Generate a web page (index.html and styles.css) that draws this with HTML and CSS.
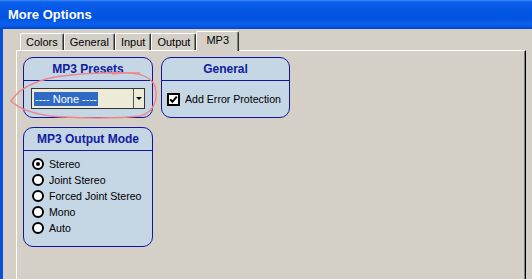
FILE: index.html
```html
<!DOCTYPE html>
<html lang="en">
<head>
  <meta charset="UTF-8" />
  <title>More Options</title>
  <link rel="stylesheet" href="styles.css">
</head>
<body>
  <div class="window">
    <div class="titlebar">More Options</div>

    <div class="main">
      <div class="tabs">
        <div class="tab">Colors</div>
        <div class="tab">General</div>
        <div class="tab">Input</div>
        <div class="tab">Output</div>
        <div class="tab active">MP3</div>
      </div>

      <div class="panel">
        <div class="groups">
          <div class="group presets">
            <div class="group-title">MP3 Presets</div>
            <div class="group-body">
              <div class="combo">
                <span class="combo-value">---- None ----</span>
                <span class="combo-btn"></span>
              </div>
            </div>
          </div>

          <div class="group general">
            <div class="group-title">General</div>
            <div class="group-body">
              <label class="check">
                <svg width="13" height="13" viewBox="0 0 13 13">
                  <rect x="1" y="1" width="11" height="11" fill="#fff" stroke="#000" stroke-width="2"/>
                  <path d="M3.2 6.4 L5.4 8.8 L9.8 3.6" fill="none" stroke="#000" stroke-width="2"/>
                </svg>
                Add Error Protection
              </label>
            </div>
          </div>

          <div class="group mode">
            <div class="group-title">MP3 Output Mode</div>
            <div class="group-body">
              <div class="radio checked"><span class="dot"></span>Stereo</div>
              <div class="radio"><span class="dot"></span>Joint Stereo</div>
              <div class="radio"><span class="dot"></span>Forced Joint Stereo</div>
              <div class="radio"><span class="dot"></span>Mono</div>
              <div class="radio"><span class="dot"></span>Auto</div>
            </div>
          </div>
        </div>
      </div>
    </div>

    <!-- hand drawn marker around the presets box -->
    <svg class="scribble" width="532" height="279" viewBox="0 0 532 279">
      <path d="M112 74 C132 71 150 74 155 86 C158 98 155 112 140 116 C115 119 70 118 50 116 C30 113 18 108 11 101 C18 90 30 82 55 77 C80 73 110 72 140 73"
            fill="none" stroke="#f0868c" stroke-width="1.5"/>
    </svg>
  </div>
</body>
</html>
```

FILE: styles.css
```css
* { box-sizing: border-box; }
body {
  margin: 0;
  font-family: "Liberation Sans", Arial, sans-serif;
  font-size: 11px;
  color: #000;
}
.window {
  position: relative;
  width: 532px;
  height: 279px;
  background: #d4d0c8;
  overflow: hidden;
  display: flex;
  flex-direction: column;
}
.titlebar {
  height: 29px;
  padding-left: 8px;
  line-height: 30px;
  color: #fff;
  font-weight: bold;
  font-size: 13px;
  background: linear-gradient(#3d8cf8 0, #0b5fea 2px, #0458e6 10px, #0252e0 18px, #0a60ee 24px, #0556e4 27px, #0040c0 29px);
}
.main {
  flex: 1;
  display: flex;
  flex-direction: column;
  border-left: 3px solid #0a4fd8;
  padding: 2px 6px 0 13px;
}
.tabs {
  display: flex;
  align-items: flex-end;
  height: 19px;
  padding-left: 4px;
}
.tab {
  height: 17px;
  padding: 0 5px;
  line-height: 16px;
  font-size: 11px;
  border-top: 1px solid #fff;
  border-left: 1px solid #fff;
  border-right: 1px solid #303030;
  border-radius: 2px 2px 0 0;
  box-shadow: inset -1px 0 #808080;
}
.tab.active {
  position: relative;
  z-index: 1;
  height: 20px;
  margin-bottom: -1px;
  padding: 0 9px;
  line-height: 17px;
  background: #d4d0c8;
}
.panel {
  flex: 1;
  border-top: 1px solid #fff;
  border-left: 1px solid #fff;
  border-right: 1px solid #000;
  box-shadow: inset -1px 0 #808080;
  padding: 6px 0 0 6px;
}
.groups {
  display: grid;
  grid-template-columns: 130px 129px;
  column-gap: 8px;
  row-gap: 9px;
  align-items: start;
}
.group {
  background: #c5d6e4;
  border: 1px solid #14149c;
  border-radius: 10px;
  white-space: nowrap;
}
.presets, .general { height: 61px; }
.mode { height: 120px; }
.group-title {
  height: 23px;
  line-height: 22px;
  border-bottom: 1px solid #14149c;
  text-align: center;
  font-weight: bold;
  font-size: 12px;
  color: #10209e;
}
.presets .group-body { padding: 7px 0 0 7px; }
.combo {
  width: 114px;
  height: 21px;
  border: 1px solid #333;
  background: #ecebd8;
  display: flex;
  align-items: center;
  font-size: 11px;
}
.combo-value {
  margin-left: 2px;
  padding: 0 1px;
  line-height: 14px;
  background: #316ac5;
  color: #fff;
}
.combo-btn {
  margin-left: auto;
  width: 11px;
  height: 100%;
  border-left: 1px solid #555;
  display: flex;
  align-items: center;
  justify-content: center;
}
.combo-btn::after {
  content: "";
  border-left: 3px solid transparent;
  border-right: 3px solid transparent;
  border-top: 3px solid #000;
}
.general .group-body {
  height: 36px;
  display: flex;
  align-items: center;
  padding-left: 5px;
}
.check {
  display: flex;
  align-items: center;
  gap: 5px;
  font-size: 10.6px;
}
.check svg { display: block; }
.mode .group-body { padding: 5px 0 0 8px; }
.radio {
  height: 16px;
  display: flex;
  align-items: center;
  font-size: 10.6px;
}
.dot {
  flex: none;
  width: 12px;
  height: 12px;
  margin-right: 5px;
  border: 2px solid #000;
  border-radius: 50%;
  background: #fff;
  display: flex;
  align-items: center;
  justify-content: center;
}
.radio.checked .dot::after {
  content: "";
  width: 4px;
  height: 4px;
  border-radius: 50%;
  background: #000;
}
.scribble {
  position: absolute;
  top: 0;
  left: 0;
  pointer-events: none;
}
```
